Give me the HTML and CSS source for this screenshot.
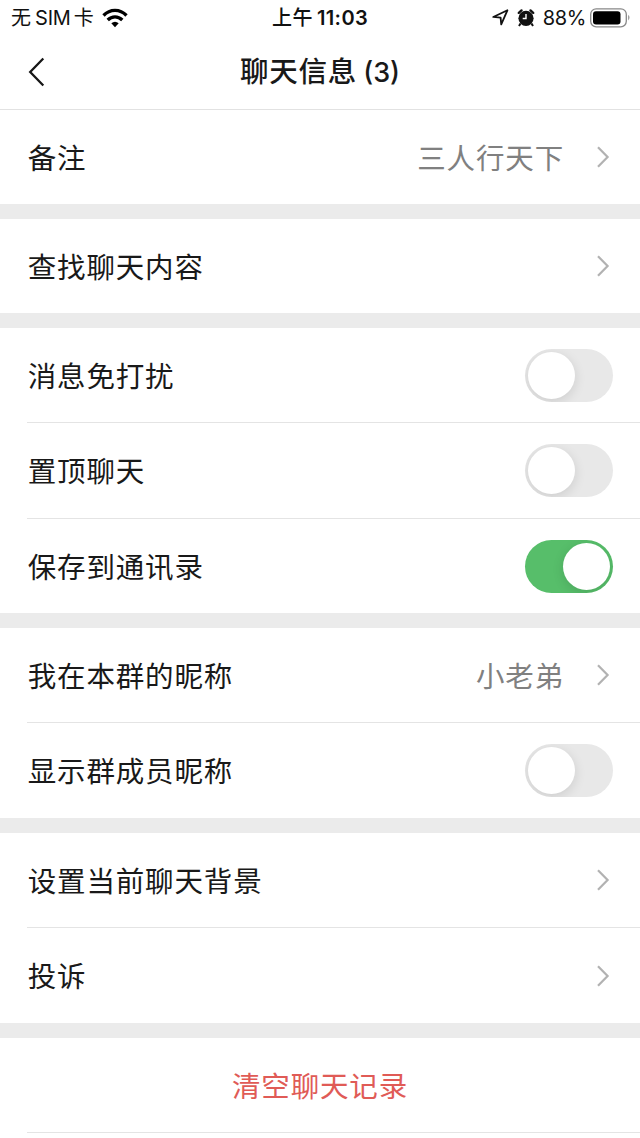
FILE: index.html
```html
<!DOCTYPE html>
<html lang="zh-CN">
<head>
<meta charset="utf-8">
<title>聊天信息</title>
<link rel="stylesheet" href="styles.css">
</head>
<body>
<svg class="defs" aria-hidden="true"><symbol id="chevron" viewBox="0 0 14 24"><path d="M2 2.3 L11.6 12 L2 21.7" fill="none" stroke="currentColor" stroke-width="2.2"/></symbol></svg>
<div class="status">
  <div class="carrier"><span>无</span><span class="sim">SIM</span><span>卡</span>
    <svg class="wifi" width="26" height="20" viewBox="0 0 26 20"><g fill="none" stroke="#000" stroke-width="3.3"><path d="M1.5 7.5 C8 0.7 18 0.7 24.500 7.500"/><path d="M5.700 12 C10 7.700 16 7.700 20.300 12"/></g><path d="M9.300 15.300 Q13 12.300 16.700 15.300 L13 19.200 Z"/></svg>
  </div>
  <div class="clock"><span>上午</span><span class="time">11:03</span></div>
  <div class="indicators">
    <svg class="location" width="17" height="17" viewBox="0 0 16 16"><path d="M1.200 7.500 L14.500 1.200 L8.700 14.500 L8.100 8.100 Z" fill="none" stroke="#111" stroke-width="1.700" stroke-linejoin="round"/></svg>
    <svg class="alarm" width="18" height="18" viewBox="0 0 18 18"><path d="M3.500 14.500 L2 17 M14.500 14.500 L16 17" stroke="#111" stroke-width="2"/><circle cx="9" cy="9.300" r="7.600" fill="#111"/><path d="M1.800 3.900 L4.500 1.400 M13.500 1.400 L16.200 3.900" stroke="#111" stroke-width="2.300" stroke-linecap="round"/><path d="M9 5 V9.500 H5.700" fill="none" stroke="#fff" stroke-width="1.400"/></svg>
    <span class="percent">88%</span>
    <svg class="battery" width="41" height="20" viewBox="0 0 41 20"><rect x=".7" y=".8" width="35.600" height="18" rx="5.500" fill="#fff" stroke="#888" stroke-width="1.300"/><rect x="3" y="3.200" width="27.500" height="13.200" rx="3"/><path d="M38.300 6.800 Q40.500 9.500 38.300 12.500 Z" fill="#777"/></svg>
  </div>
</div>
<header class="header">
  <svg class="back" width="18" height="30" viewBox="0 0 18 30"><path d="M15.300 1.500 L2.200 15 L15.300 28.500" fill="none" stroke="#171717" stroke-width="2.300"/></svg>
  <h1 class="title">聊天信息<span class="count">(3)</span></h1>
</header>
<main>
  <section class="group">
    <div class="row"><span class="label">备注</span><span class="value">三人行天下</span><svg class="chevron"><use href="#chevron"/></svg></div>
  </section>
  <section class="group">
    <div class="row"><span class="label">查找聊天内容</span><svg class="chevron"><use href="#chevron"/></svg></div>
  </section>
  <section class="group">
    <div class="row"><span class="label">消息免打扰</span><span class="switch"><i class="knob"></i></span></div>
    <div class="row"><span class="label">置顶聊天</span><span class="switch"><i class="knob"></i></span></div>
    <div class="row"><span class="label">保存到通讯录</span><span class="switch on"><i class="knob"></i></span></div>
  </section>
  <section class="group">
    <div class="row"><span class="label">我在本群的昵称</span><span class="value">小老弟</span><svg class="chevron"><use href="#chevron"/></svg></div>
    <div class="row"><span class="label">显示群成员昵称</span><span class="switch"><i class="knob"></i></span></div>
  </section>
  <section class="group">
    <div class="row"><span class="label">设置当前聊天背景</span><svg class="chevron"><use href="#chevron"/></svg></div>
    <div class="row"><span class="label">投诉</span><svg class="chevron"><use href="#chevron"/></svg></div>
  </section>
  <section class="group last">
    <div class="row danger"><span>清空聊天记录</span></div>
    <div class="row next"></div>
  </section>
</main>
</body>
</html>
```
FILE: styles.css
```css
* { box-sizing: border-box; }
body {
  margin: 0;
  background: #fff;
  color: #191919;
  font-family: Inter, "Noto Sans CJK SC", sans-serif;
}
.defs { display: none; }
svg { display: block; flex: none; }
.status {
  height: 36px;
  display: grid;
  grid-template-columns: 1fr auto 1fr;
  align-items: center;
  padding: 0 9px 0 11px;
  font-size: 20px;
  line-height: 36px;
  color: #111;
}
.carrier, .clock, .indicators { display: flex; align-items: center; height: 36px; }
.sim { margin: 0 3px 0 4px; letter-spacing: -.2px; }
.wifi { margin-left: 8px; }
.clock { font-weight: 500; gap: 4px; margin-left: -2px; }
.clock span:first-child { letter-spacing: .5px; }
.time { font-weight: 600; letter-spacing: .4px; }
.indicators { justify-content: flex-end; }
.location { margin-bottom: 1px; }
.alarm { margin: 0 0 1px 8px; }
.percent { margin: 0 4px 0 8px; letter-spacing: -.4px; }
.battery { margin-bottom: 1px; }
.header {
  height: 74px;
  display: grid;
  grid-template-columns: 100px 1fr 100px;
  align-items: center;
  border-bottom: 1px solid #e2e2e2;
}
.back { margin: -2px 0 0 28px; }
.title {
  margin: 0;
  text-align: center;
  font-size: 28.5px;
  line-height: 40px;
  font-weight: 500;
  letter-spacing: .8px;
}
.count { margin-left: 6px; font-weight: 500; font-size: 27px; letter-spacing: 0; }
.group { border-bottom: 15px solid #ebebeb; }
.row {
  height: 95px;
  display: flex;
  align-items: center;
  margin-left: 27px;
  padding-right: 27px;
  font-size: 28.5px;
  letter-spacing: .85px;
}
.row:first-child { height: 94px; }
.row:nth-child(2) { height: 96px; }
.row + .row { border-top: 1px solid #e4e4e4; }
.label { flex: 1; padding: 0 0 2px .7px; }
.value { color: #808080; padding-bottom: 2px; }
.chevron { width: 14px; height: 24px; margin: 0 3px 0 32px; color: #b2b2b2; }
.switch {
  width: 88px;
  height: 53px;
  padding: 2px 3px;
  border-radius: 27px;
  background: #e8e8e8;
  overflow: hidden;
  display: flex;
  align-items: center;
}
.switch.on { background: #57be6a; justify-content: flex-end; }
.knob {
  width: 47px;
  height: 47px;
  border-radius: 50%;
  background: #fff;
  box-shadow: 0 3px 12px rgba(0, 0, 0, .12);
}
.last { border: 0; }
.danger { justify-content: center; margin-left: 0; padding: 0 0 2px; color: #e05b56; }
.row.next { height: 6px; }
```
